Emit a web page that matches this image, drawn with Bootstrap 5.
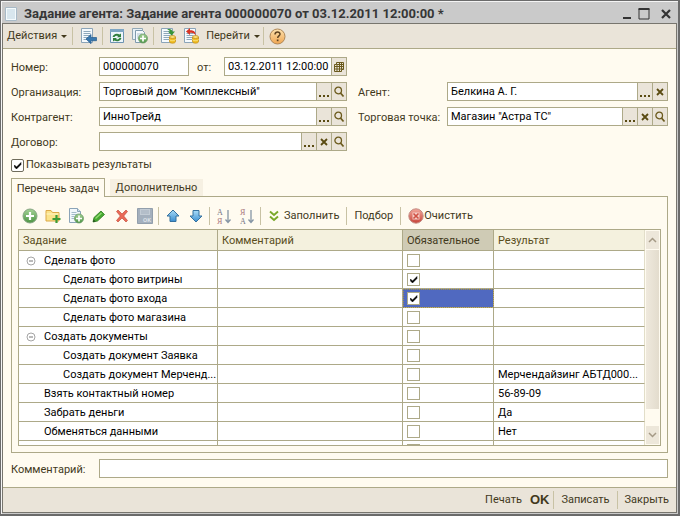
<!DOCTYPE html>
<html lang="ru">
<head>
<meta charset="utf-8">
<meta name="viewport" content="width=device-width, initial-scale=1">
<title>Задание агента</title>
<link href="https://cdn.jsdelivr.net/npm/bootstrap@5.3.0/dist/css/bootstrap.min.css" rel="stylesheet">
<style>
:root { --line: #ada988; --cream: #fffbf0; --bar: #eae4d9; --ink: #42391c; }
body { font: 11px/16px Roboto, "Liberation Sans", Arial, sans-serif; color: var(--ink); background: #c9c9c9; }
svg { display: block; flex: none; }
button { font: inherit; color: inherit; background: none; border: 0; padding: 0; }
.win { border: 1px solid #6b6b6b; border-right-width: 2px; border-bottom-width: 2px; padding: 0 1px 1px 1px; background: #cacaca; box-shadow: inset 1px 1px #f4f4f4; }
.win-title { height: 22px; padding: 3px 5px 0 2px; gap: 6px; color: #363636; }
.win-title h1 { font-size: 13px; line-height: 18px; font-weight: bold; }
.win-body { border: 1px solid #77756e; background: var(--cream); min-height: 0; }
.bar-top { height: 25px; background: var(--bar); border-bottom: 1px solid var(--line); padding: 0 4px; }
.bar-bottom { height: 25px; background: var(--bar); border-top: 1px solid var(--line); padding: 0 7px; }
.vline { width: 1px; height: 18px; background: #c8c2a4; margin: 0 2px; flex: none; }
.vline-wide { margin: 0 7px; }
.vline-left { margin-left: 2px; }
.ico { width: 23px; display: flex; justify-content: center; align-items: center; flex: none; }
.caret { border: 3px solid transparent; border-top-color: #42391c; border-bottom: 0; width: 6px; margin-right: 1px; }
.form-area { padding: 8px 8px 0 8px; min-height: 0; }
.cols { gap: 11px; }
.col-l { flex: 336 1 0; min-width: 0; }
.col-r { flex: 310 1 0; min-width: 0; padding-top: 25px; }
.stack { gap: 6px; }
.lab { width: 88px; flex: none; white-space: nowrap; padding-top: 2px; }
.col-r .lab { width: 89px; }
.fld { border: 1px solid var(--line); background: #fff; height: 19px; min-width: 0; }
.fld input { border: 0; outline: 0; background: transparent; color: #000; padding: 1px 0 0 3px; flex: 1 1 0; min-width: 0; width: 0; font: inherit; }
.fld button { width: 15px; border-left: 1px solid var(--line); background: var(--bar); color: #5a4b12; display: flex; align-items: center; justify-content: center; flex: none; }
.num { width: 90px; }
.lab-date { width: 35px; padding: 2px 0 0 8px; flex: none; }
.showrow { padding-top: 6px; gap: 2px; }
.tick { appearance: none; margin: 0; width: 13px; height: 13px; border: 1px solid var(--line); background: #fff; flex: none; display: block; }
.tick:checked { background: #fff url("data:image/svg+xml,%3Csvg xmlns='http://www.w3.org/2000/svg' viewBox='0 0 11 11'%3E%3Cpath d='M2.5 5v2l2 2 4.500-4.500v-2l-4.500 4.500z' fill='%23000' stroke='%23000' stroke-width='.5'/%3E%3C/svg%3E"); }
.tick-round { border-color: #6f6c5c; border-radius: 2px; }
.tabs { padding-top: 5px; gap: 5px; }
.tab-on { border: 1px solid var(--line); border-bottom: 0; background: var(--cream); height: 19px; width: 94px; margin-bottom: -1px; padding-top: 1px; position: relative; }
.tab-off { background: #f6f0e2; height: 17px; width: 93px; padding-top: 1px; }
.sheet { border: 1px solid var(--line); padding: 6px; min-height: 0; }
.tools { height: 26px; }
.gridbox { border: 1px solid var(--line); background: #fff; min-height: 0; overflow: hidden; }
.gridbox table { table-layout: fixed; width: 100%; border-collapse: separate; border-spacing: 0; color: #000; }
.c-task { width: 199px; }
.c-note { width: 185px; }
.c-must { width: 91px; }
.gridbox th { font-weight: normal; color: #594d1b; background: #f4f1de; height: 21px; }
.gridbox td { height: 19px; }
.gridbox th, .gridbox td { border-right: 1px solid var(--line); border-bottom: 1px solid var(--line); padding: 2px 4px 0; line-height: 16px; overflow: hidden; white-space: nowrap; text-overflow: ellipsis; }
.gridbox td:nth-child(3) { padding-top: 0; }
.gridbox th:last-child, .gridbox td:last-child { border-right-color: #e2dec9; }
.gridbox th.cur { background: #cfcbb5; color: #42391c; }
.gridbox td.sel { background: #5069c0; outline: 1px dotted #a58f45; outline-offset: -1px; }
.gridbox td.l1 { padding-left: 25px; }
.gridbox td.l2 { padding-left: 44px; padding-right: 0; }
.gridbox td.grp { padding-left: 7px; }
.grp svg { margin-right: 8px; }
.sbar { width: 15px; padding: 1px; flex: none; background: var(--cream); }
.sbar button { height: 18px; background: #ede7da; display: flex; justify-content: center; align-items: center; }
.thumb { flex: 177 1 0; margin-top: 1px; background: linear-gradient(90deg, #efe9dd, #e3dccd); }
.track { flex: 19 1 0; }
.foot { padding: 6px 0 9px; }
.ok { font: bold 13px/16px "Liberation Sans", Arial, sans-serif; }
</style>
<script src="https://cdn.jsdelivr.net/npm/bootstrap@5.3.0/dist/js/bootstrap.bundle.min.js"></script>
</head>
<body>
<svg width="0" height="0" class="position-absolute" aria-hidden="true">
  <defs>
    <linearGradient id="gGreen" x2="0" y2="1"><stop stop-color="#a6d397"/><stop offset="1" stop-color="#4c9443"/></linearGradient>
    <linearGradient id="gBlue" x2="0" y2="1"><stop stop-color="#a9dcf8"/><stop offset="1" stop-color="#3b8ed0"/></linearGradient>
    <linearGradient id="gRed" x2="0" y2="1"><stop stop-color="#f3a79b"/><stop offset="1" stop-color="#c74439"/></linearGradient>
    <linearGradient id="gOrange" x2="0" y2="1"><stop stop-color="#fde2ae"/><stop offset="1" stop-color="#efa551"/></linearGradient>
    <symbol id="lens" viewBox="0 0 12 12"><circle cx="5.200" cy="4.500" r="3.300" fill="none" stroke="#6b5a1c" stroke-width="1.300"/><path d="M7.500 7l3 3.500" stroke="#6b5a1c" stroke-width="1.700"/></symbol>
    <symbol id="cross" viewBox="0 0 12 12"><path d="M3 3l6 6M9 3l-6 6" stroke="#5a4b12" stroke-width="1.800"/></symbol>
    <symbol id="dots" viewBox="0 0 12 12"><path d="M1 9h2v2H1zM5 9h2v2H5zM9 9h2v2H9z" fill="#5a4b12"/></symbol>
    <symbol id="sheet" viewBox="0 0 16 16"><path d="M1.500 .5h11v14h-11z" fill="#f5fafd" stroke="#8ba4b8"/><path d="M3.500 3.500h7M3.500 5.500h7M3.500 7.500h7M3.500 9.500h7M3.500 11.500h7" stroke="#8fa9bb"/></symbol>
    <symbol id="coins" viewBox="0 0 16 16"><path d="M9.500 9v4.500c0 2.200 6 2.200 6 0V9" fill="#f0bd22" stroke="#c38d16" stroke-width=".8"/><ellipse cx="12.500" cy="9" rx="3" ry="1.400" fill="#fbe581" stroke="#c38d16" stroke-width=".8"/><path d="M9.500 11.300c0 1.800 6 1.800 6 0" fill="none" stroke="#fbe581"/></symbol>
    <symbol id="docplus" viewBox="0 0 16 16"><path d="M.5 .5h10v11H.5z" fill="#e7f0f5" stroke="#92a8b6"/><path d="M3.500 2.500h7l2 2v10h-9z" fill="#f4f9fc" stroke="#7f9aae"/><path d="M5 6h5M5 8h4M5 10h3" stroke="#abc0cd"/><circle cx="11" cy="10.500" r="4.500" fill="url(#gGreen)" stroke="#6c9c67" stroke-width=".8"/><path d="M11 7.500v6M8 10.500h6" stroke="#fff" stroke-width="1.700"/></symbol>
    <symbol id="pageplus" viewBox="0 0 16 16"><path d="M1.500 .5h8l3 3v11h-11z" fill="#f2f8fb" stroke="#8ba4b8"/><path d="M9.500 .5v3h3" fill="#d3e2ec" stroke="#8ba4b8"/><path d="M3.500 4.500h5M3.500 6.500h6M3.500 8.500h3M3.500 10.500h3" stroke="#a4bccb"/><circle cx="11" cy="10.500" r="4.500" fill="url(#gGreen)" stroke="#6c9c67" stroke-width=".8"/><path d="M11 7.500v6M8 10.500h6" stroke="#fff" stroke-width="1.700"/></symbol>
    <symbol id="minus" viewBox="0 0 10 10"><circle cx="5" cy="5" r="4" fill="#fff" stroke="#a5a5a5"/><path d="M3 5h4" stroke="#777"/></symbol>
  </defs>
</svg>

<main class="win vh-100 d-flex flex-column">
  <header class="win-title d-flex align-items-center flex-shrink-0">
    <svg width="14" height="16" viewBox="0 0 14 16"><path d="M1.500 1.500h11v13h-11z" fill="#f4fafc" stroke="#a8bac7"/><path d="M3 4h8M3 6h8M3 8h8M3 10h8M3 12h8" stroke="#bcd2df"/></svg>
    <h1 class="m-0 flex-grow-1 text-nowrap">Задание агента: Задание агента 000000070 от 03.12.2011 12:00:00 *</h1>
    <button aria-label="Свернуть"><svg width="10" height="12"><path d="M1 10h8" stroke="#333" stroke-width="2"/></svg></button>
    <button aria-label="Развернуть"><svg width="12" height="12"><path d="M1 1h10v10H1z" fill="none" stroke="#333"/><path d="M.5 1h11" stroke="#333" stroke-width="2"/></svg></button>
    <button class="ms-1" aria-label="Закрыть окно"><svg width="12" height="12"><path d="M2 2l8 8M10 2l-8 8" stroke="#333" stroke-width="2.200"/></svg></button>
  </header>

  <div class="win-body flex-grow-1 d-flex flex-column">
    <nav class="bar-top d-flex align-items-center flex-shrink-0" aria-label="Команды">
      <button class="d-flex align-items-center gap-1">Действия <span class="caret"></span></button>
      <span class="vline mx-1"></span>
      <button class="ico" aria-label="Записать и закрыть"><svg width="17" height="16" viewBox="0 0 17 16"><use href="#sheet" width="16" height="16"/><path d="M6 11l5-4.500V9.500h5.500v3.200H11v3z" fill="#3978ae" stroke="#245a8c" stroke-width=".7"/></svg></button>
      <span class="vline"></span>
      <button class="ico" aria-label="Обновить"><svg width="14" height="14" viewBox="0 0 14 14"><path d="M.5 .5h13v13H.5z" fill="#edf6fb" stroke="#6d93b1"/><path d="M0 0h14v3H0z" fill="#7ea6c4"/><path d="M2.500 8a4.500 4 0 0 1 7-2.500L11 4.500v3.800H7l1.200-1.200A2.700 2.500 0 0 0 4.500 8z" fill="#317f3d"/><path d="M11.500 9a4.500 4 0 0 1-7 2.500L3 12.600V9h4L5.800 10a2.700 2.500 0 0 0 3.700-1z" fill="#317f3d"/></svg></button>
      <button class="ico" aria-label="Скопировать"><svg width="16" height="16"><use href="#docplus"/></svg></button>
      <span class="vline"></span>
      <button class="ico" aria-label="Провести"><svg width="16" height="16" viewBox="0 0 16 16"><use href="#sheet"/><use href="#coins"/><path d="M7 1.500c3-1 5 0 5.500 2H15L11.500 7.500 8 3.500h2C9.500 2.400 8.500 2 7 1.500z" fill="#37943a"/></svg></button>
      <button class="ico" aria-label="Отмена проведения"><svg width="16" height="16" viewBox="0 0 16 16"><use href="#sheet"/><use href="#coins"/><path d="M3 3.500L7 0v2.300c4-.3 6 2 5.500 5.200C11.500 5.300 10 4.500 7 4.800V7z" fill="#d63525"/></svg></button>
      <button class="d-flex align-items-center gap-1 ms-1">Перейти <span class="caret"></span></button>
      <span class="vline"></span>
      <button class="ico" aria-label="Справка"><svg width="17" height="17" viewBox="0 0 17 17"><circle cx="8.500" cy="8.500" r="7.500" fill="url(#gOrange)" stroke="#ae8758"/><path d="M6 6.500c.2-3.400 5.200-3.200 5-.2-.1 1.500-2.300 1.700-2.300 3.700" fill="none" stroke="#5f4320" stroke-width="1.500"/><path d="M7.800 11.500h1.700v1.700H7.800z" fill="#5f4320"/></svg></button>
    </nav>

    <div class="form-area flex-grow-1 d-flex flex-column">
      <div class="d-flex cols">
        <div class="col-l stack d-flex flex-column">
          <div class="d-flex align-items-center">
            <label class="lab" for="n">Номер:</label>
            <div class="fld num d-flex"><input id="n" value="000000070"></div>
            <label class="lab-date" for="d">от:</label>
            <div class="fld d-flex flex-grow-1"><input id="d" value="03.12.2011 12:00:00"><button aria-label="Календарь"><svg width="12" height="12" viewBox="0 0 12 12"><path d="M3.500 1.500h7v7h-2v2h-7v-7h2z" fill="#eae4d9" stroke="#6b5a1c"/><path d="M1.500 5.500h9M1.500 8h9M4 3.500v7M6.500 1.500v9M3.500 3.500h7M8.500 1.500v7" stroke="#6b5a1c" fill="none"/></svg></button></div>
          </div>
          <div class="d-flex align-items-center">
            <label class="lab" for="o">Организация:</label>
            <div class="fld d-flex flex-grow-1"><input id="o" value="Торговый дом &quot;Комплексный&quot;"><button aria-label="Выбрать"><svg width="12" height="12"><use href="#dots"/></svg></button><button aria-label="Открыть"><svg width="12" height="12"><use href="#lens"/></svg></button></div>
          </div>
          <div class="d-flex align-items-center">
            <label class="lab" for="k">Контрагент:</label>
            <div class="fld d-flex flex-grow-1"><input id="k" value="ИнноТрейд"><button aria-label="Выбрать"><svg width="12" height="12"><use href="#dots"/></svg></button><button aria-label="Открыть"><svg width="12" height="12"><use href="#lens"/></svg></button></div>
          </div>
          <div class="d-flex align-items-center">
            <label class="lab" for="g">Договор:</label>
            <div class="fld d-flex flex-grow-1"><input id="g"><button aria-label="Выбрать"><svg width="12" height="12"><use href="#dots"/></svg></button><button aria-label="Очистить поле"><svg width="12" height="12"><use href="#cross"/></svg></button><button aria-label="Открыть"><svg width="12" height="12"><use href="#lens"/></svg></button></div>
          </div>
        </div>
        <div class="col-r stack d-flex flex-column">
          <div class="d-flex align-items-center">
            <label class="lab" for="a">Агент:</label>
            <div class="fld d-flex flex-grow-1"><input id="a" value="Белкина А. Г."><button aria-label="Выбрать"><svg width="12" height="12"><use href="#dots"/></svg></button><button aria-label="Очистить поле"><svg width="12" height="12"><use href="#cross"/></svg></button></div>
          </div>
          <div class="d-flex align-items-center">
            <label class="lab" for="t">Торговая точка:</label>
            <div class="fld d-flex flex-grow-1"><input id="t" value="Магазин &quot;Астра ТС&quot;"><button aria-label="Выбрать"><svg width="12" height="12"><use href="#dots"/></svg></button><button aria-label="Очистить поле"><svg width="12" height="12"><use href="#cross"/></svg></button><button aria-label="Открыть"><svg width="12" height="12"><use href="#lens"/></svg></button></div>
          </div>
        </div>
      </div>
      <div class="showrow d-flex align-items-center"><input class="tick tick-round" type="checkbox" id="show" checked><label for="show">Показывать результаты</label></div>

      <div class="tabs d-flex align-items-end" role="tablist">
        <button class="tab-on" role="tab" aria-selected="true">Перечень задач</button>
        <button class="tab-off" role="tab" aria-selected="false">Дополнительно</button>
      </div>

      <section class="sheet flex-grow-1 d-flex flex-column">
        <div class="tools d-flex align-items-center flex-shrink-0">
          <button class="ico" aria-label="Добавить"><svg width="16" height="16" viewBox="0 0 16 16"><circle cx="8" cy="8" r="7" fill="url(#gGreen)" stroke="#87a583"/><path d="M8 4v8M4 8h8" stroke="#fff" stroke-width="2.200"/></svg></button>
          <button class="ico" aria-label="Добавить группу"><svg width="16" height="16" viewBox="0 0 16 16"><path d="M1 13V2.500h5l1.500 2H14V13z" fill="#fbe38b" stroke="#dca947"/><path d="M1.500 6h12" stroke="#fff5c4"/><path d="M11.500 7v8M7.500 11h8" stroke="#3d9b35" stroke-width="2.200"/></svg></button>
          <button class="ico" aria-label="Добавить копированием"><svg width="16" height="16"><use href="#pageplus"/></svg></button>
          <button class="ico" aria-label="Изменить"><svg width="16" height="16" viewBox="0 0 16 16"><path d="M2 14l1-4.500L10 3l3.500 3.500-7 6.500z" fill="#47a930" stroke="#2e7b22" stroke-width=".8"/><path d="M4.500 10.500L10.500 5" stroke="#93db72" stroke-width="1.300"/><path d="M2 14l.6-2.500 2 1.900z" fill="#234a1c"/></svg></button>
          <button class="ico" aria-label="Удалить"><svg width="14" height="14" viewBox="0 0 14 14"><path d="M1.500 2.500L3 1l4 4 4-4 1.500 1.500L8.700 7l3.800 4.500L11 13 7 9l-4 4-1.500-1.500L5.300 7z" fill="#ea6a56" stroke="#c4503f" stroke-width=".7"/></svg></button>
          <button class="ico" aria-label="Закончить редактирование" disabled><svg width="16" height="16" viewBox="0 0 16 16"><path d="M.5 .5h15v15H.5z" fill="#a4b0bd" stroke="#929fac"/><path d="M3 1h10v6H3z" fill="#c3ccd5"/><path d="M4 3h8M4 5h8" stroke="#a4b0bd"/><text x="6" y="14" font-size="6" font-weight="bold" fill="#dce2e8">OK</text></svg></button>
          <span class="vline"></span>
          <button class="ico" aria-label="Вверх"><svg width="14" height="14" viewBox="0 0 14 14"><path d="M7 1l6 6h-3v5.500H4V7H1z" fill="url(#gBlue)" stroke="#35719f" stroke-linejoin="round"/></svg></button>
          <button class="ico" aria-label="Вниз"><svg width="14" height="14" viewBox="0 0 14 14"><path d="M7 13L1 7h3V1.500h6V7h3z" fill="url(#gBlue)" stroke="#35719f" stroke-linejoin="round"/></svg></button>
          <span class="vline"></span>
          <button class="ico" aria-label="Сортировать по возрастанию"><svg width="16" height="20" viewBox="0 0 16 20" font-family="Liberation Serif, serif" font-size="8"><text x="1" y="9" fill="#777786">А</text><text x="1" y="18" fill="#a8747b">Я</text><path d="M12 4v12M9.500 13.500l2.500 3 2.500-3" fill="none" stroke="#8595a5" stroke-width="1.300"/></svg></button>
          <button class="ico" aria-label="Сортировать по убыванию"><svg width="16" height="20" viewBox="0 0 16 20" font-family="Liberation Serif, serif" font-size="8"><text x="1" y="9" fill="#a8747b">Я</text><text x="1" y="18" fill="#777786">А</text><path d="M12 4v12M9.500 13.500l2.500 3 2.500-3" fill="none" stroke="#8595a5" stroke-width="1.300"/></svg></button>
          <span class="vline vline-wide vline-left"></span>
          <button class="d-flex align-items-center gap-1"><svg width="12" height="12" viewBox="0 0 12 12"><path d="M2 1.500l4 3.500 4-3.500M2 6.500L6 10l4-3.500" fill="none" stroke="#7aa829" stroke-width="1.900"/></svg>Заполнить</button>
          <span class="vline vline-wide"></span>
          <button>Подбор</button>
          <span class="vline vline-wide"></span>
          <button class="d-flex align-items-center"><svg width="16" height="16" viewBox="0 0 16 16"><circle cx="8" cy="8" r="7.200" fill="url(#gRed)" stroke="#c48b83"/><path d="M4.500 4.500h7v7h-7z" fill="#fbe2dc" opacity=".8"/><path d="M5.500 5.500l5 5M10.500 5.500l-5 5" stroke="#cf5043" stroke-width="1.600"/></svg>Очистить</button>
        </div>

        <div class="gridbox flex-grow-1 d-flex">
          <div class="flex-grow-1 overflow-hidden">
            <table>
              <colgroup><col class="c-task"><col class="c-note"><col class="c-must"><col></colgroup>
              <thead><tr><th>Задание</th><th>Комментарий</th><th class="cur">Обязательное</th><th>Результат</th></tr></thead>
              <tbody>
                <tr><td class="grp"><div class="d-flex align-items-center"><svg width="10" height="10"><use href="#minus"/></svg>Сделать фото</div></td><td></td><td><input class="tick" type="checkbox" aria-label="Сделать фото"></td><td></td></tr>
                <tr><td class="l2">Сделать фото витрины</td><td></td><td><input class="tick" type="checkbox" checked aria-label="Сделать фото витрины"></td><td></td></tr>
                <tr><td class="l2">Сделать фото входа</td><td></td><td class="sel"><input class="tick" type="checkbox" checked aria-label="Сделать фото входа"></td><td></td></tr>
                <tr><td class="l2">Сделать фото магазина</td><td></td><td><input class="tick" type="checkbox" aria-label="Сделать фото магазина"></td><td></td></tr>
                <tr><td class="grp"><div class="d-flex align-items-center"><svg width="10" height="10"><use href="#minus"/></svg>Создать документы</div></td><td></td><td><input class="tick" type="checkbox" aria-label="Создать документы"></td><td></td></tr>
                <tr><td class="l2">Создать документ Заявка</td><td></td><td><input class="tick" type="checkbox" aria-label="Создать документ Заявка"></td><td></td></tr>
                <tr><td class="l2">Создать документ Мерченд...</td><td></td><td><input class="tick" type="checkbox" aria-label="Создать документ Мерчендайзинг"></td><td>Мерчендайзинг АБТД000...</td></tr>
                <tr><td class="l1">Взять контактный номер</td><td></td><td><input class="tick" type="checkbox" aria-label="Взять контактный номер"></td><td>56-89-09</td></tr>
                <tr><td class="l1">Забрать деньги</td><td></td><td><input class="tick" type="checkbox" aria-label="Забрать деньги"></td><td>Да</td></tr>
                <tr><td class="l1">Обменяться данными</td><td></td><td><input class="tick" type="checkbox" aria-label="Обменяться данными"></td><td>Нет</td></tr>
                <tr><td></td><td></td><td><input class="tick" type="checkbox" aria-label="Следующая задача"></td><td></td></tr>
              </tbody>
            </table>
          </div>
          <div class="sbar d-flex flex-column">
            <button aria-label="Прокрутить вверх"><svg width="9" height="6"><path d="M1 5l3.500-3.500L8 5" fill="none" stroke="#a59a86" stroke-width="1.500"/></svg></button>
            <div class="thumb"></div><div class="track"></div>
            <button aria-label="Прокрутить вниз"><svg width="9" height="6"><path d="M1 1l3.500 3.500L8 1" fill="none" stroke="#a59a86" stroke-width="1.500"/></svg></button>
          </div>
        </div>
      </section>

      <div class="foot d-flex align-items-center">
        <label class="lab" for="c">Комментарий:</label>
        <div class="fld d-flex flex-grow-1"><input id="c"></div>
      </div>
    </div>

    <footer class="bar-bottom d-flex align-items-center justify-content-end flex-shrink-0">
      <button>Печать</button>
      <button class="ok ms-2">OK</button>
      <span class="vline vline-wide ms-1"></span>
      <button>Записать</button>
      <span class="vline vline-wide"></span>
      <button>Закрыть</button>
    </footer>
  </div>
</main>
</body>
</html>
